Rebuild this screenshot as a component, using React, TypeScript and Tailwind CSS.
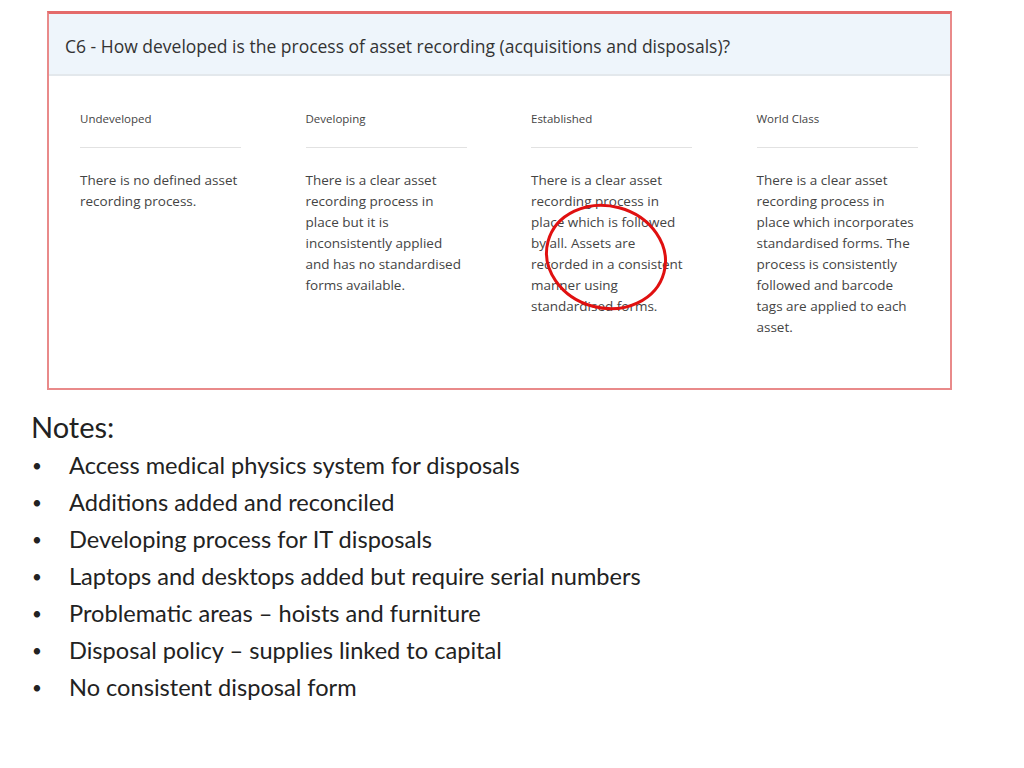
const cols = [
  { label: "Undeveloped", text: "There is no defined asset recording process." },
  { label: "Developing", text: "There is a clear asset recording process in place but it is inconsistently applied and has no standardised forms available." },
  { label: "Established", text: "There is a clear asset recording process in place which is followed by all. Assets are recorded in a consistent manner using standardised forms." },
  { label: "World Class", text: "There is a clear asset recording process in place which incorporates standardised forms. The process is consistently followed and barcode tags are applied to each asset." },
];

const notes = [
  "Access medical physics system for disposals",
  "Additions added and reconciled",
  "Developing process for IT disposals",
  "Laptops and desktops added but require serial numbers",
  "Problematic areas – hoists and furniture",
  "Disposal policy – supplies linked to capital",
  "No consistent disposal form",
];

export default function App() {
  return (
    <div className="w-[1024px] h-[768px] bg-white overflow-hidden">
      <div className="pt-[11px] pl-[47px]">
        <div className="relative w-[905px] h-[379px] border-2 border-[#e98a8a] border-t-[3px] border-t-[#e46a6a]" style={{ fontFamily: '"Open Sans", sans-serif' }}>
          <div className="h-[62px] bg-[#eef5fb] border-b-2 border-[#e3e8ec] pl-[16px] pt-[19px] text-[17.5px] text-[#333]">
            C6 - How developed is the process of asset recording (acquisitions and disposals)?
          </div>
          <div className="flex pl-[31px] pt-[34px]">
            {cols.map((c) => (
              <div key={c.label} className="w-[225.5px] shrink-0">
                <div className="w-[161px] text-[11.5px] text-[#444] pb-[20px] border-b border-[#e2e2e2]">{c.label}</div>
                <div className="w-[162px] pt-[22px] text-[13.5px] leading-[21px] text-[#444]">{c.text}</div>
              </div>
            ))}
          </div>
          <svg className="absolute left-[494px] top-[188px]" width="126" height="110" viewBox="0 0 126 110">
            <ellipse cx="63" cy="55" rx="60" ry="51" transform="rotate(15 63 55)" fill="none" stroke="#e01010" strokeWidth="3" />
          </svg>
        </div>
      </div>
      <div className="pl-[31px] pt-[20px] text-[#222]" style={{ fontFamily: "Lato, sans-serif" }}>
        <div className="text-[29px] leading-[34px]">Notes:</div>
        <div className="pt-[3px]">
          {notes.map((n) => (
            <div key={n} className="flex h-[37px] items-center text-[23.6px]">
              <span className="w-[38px] pl-[1px] text-[17px]">•</span>
              <span>{n}</span>
            </div>
          ))}
        </div>
      </div>
    </div>
  );
}
